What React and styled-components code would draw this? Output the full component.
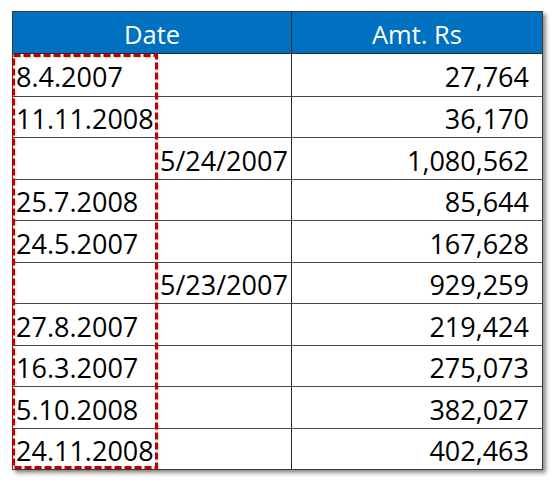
import React from "react";
import styled, { createGlobalStyle } from "styled-components";

const Global = createGlobalStyle`
  html, body { margin: 0; padding: 0; background: #ffffff; }
  body { font-family: "Open Sans", "Liberation Sans", sans-serif; }
`;

const Page = styled.div`
  width: 557px;
  height: 484px;
  padding: 11px 0 0 12px;
  box-sizing: border-box;
`;

const Frame = styled.div`
  position: relative;
  width: 531px;
  box-shadow: 3px 3px 4px rgba(0, 0, 0, 0.45);
`;

const Grid = styled.div`
  display: grid;
  grid-template-columns: 145px 134px 250px;
  grid-template-rows: 42px repeat(10, 41.5px);
  border: 1px solid #3a3a3a;
  background: #ffffff;
`;

const Head = styled.div`
  grid-column: span ${(p) => p.$span || 1};
  background: #0070c0;
  color: #ffffff;
  font-size: 25.5px;
  display: flex;
  align-items: center;
  justify-content: center;
  padding-top: 2px;
  box-sizing: border-box;
  border-right: ${(p) => (p.$divider ? "1.5px solid #2a2a2a" : "none")};
  border-bottom: 1.5px solid #2a2a2a;
`;

const Cell = styled.div`
  display: flex;
  align-items: center;
  justify-content: ${(p) => (p.$right ? "flex-end" : "flex-start")};
  padding: 4px ${(p) => (p.$right ? "13px" : "0")} 0 ${(p) => p.$pl || "0"};
  box-sizing: border-box;
  font-size: 27px;
  font-weight: 450;
  color: #000000;
  border-top: ${(p) => (p.$first ? "none" : "1px solid #4a4a4a")};
  border-right: ${(p) => (p.$divider ? "1.5px solid #2a2a2a" : "none")};
  white-space: nowrap;
`;

const Dashed = styled.svg`
  position: absolute;
  left: 0;
  top: 43px;
  width: 147px;
  height: 416px;
  overflow: visible;
  pointer-events: none;
  filter: drop-shadow(1px 1px 1px rgba(0, 0, 0, 0.2));
`;

const rows = [
  ["8.4.2007", "", "27,764"],
  ["11.11.2008", "", "36,170"],
  ["", "5/24/2007", "1,080,562"],
  ["25.7.2008", "", "85,644"],
  ["24.5.2007", "", "167,628"],
  ["", "5/23/2007", "929,259"],
  ["27.8.2007", "", "219,424"],
  ["16.3.2007", "", "275,073"],
  ["5.10.2008", "", "382,027"],
  ["24.11.2008", "", "402,463"],
];

export default function App() {
  return (
    <>
      <Global />
      <Page>
        <Frame>
          <Grid>
            <Head $span={2} $divider>Date</Head>
            <Head>Amt. Rs</Head>
            {rows.map((r, i) => (
              <React.Fragment key={i}>
                <Cell $first={i === 0} $pl="3px">{r[0]}</Cell>
                <Cell $first={i === 0} $pl="2px" $divider>{r[1]}</Cell>
                <Cell $first={i === 0} $right>{r[2]}</Cell>
              </React.Fragment>
            ))}
          </Grid>
          <Dashed viewBox="0 0 147 416">
            <rect
              x="1.5"
              y="1.5"
              width="143"
              height="412"
              fill="none"
              stroke="#c00000"
              strokeWidth="3"
              strokeDasharray="7 3"
            />
          </Dashed>
        </Frame>
      </Page>
    </>
  );
}
